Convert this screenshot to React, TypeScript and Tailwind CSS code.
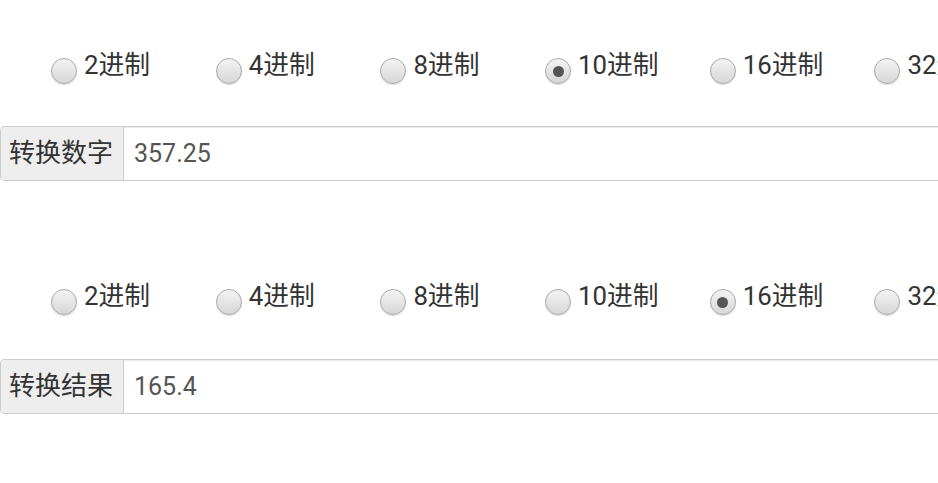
import React from "react";

const bases = ["2进制", "4进制", "8进制", "10进制", "16进制", "32进制"];

function Radio({ label, checked }: { label: string; checked: boolean }) {
  return (
    <label className="flex w-[164.7px] shrink-0 items-start">
      <span className="mt-[8px] flex h-[26px] w-[26px] items-center justify-center rounded-full border border-[#a9a9a9] bg-[linear-gradient(#f4f4f4,#d6d6d6)] shadow-[0_1px_1px_rgba(0,0,0,0.15)]">
        {checked && <span className="h-[11px] w-[11px] rounded-full bg-[#555]" />}
      </span>
      <span className="ml-[7px] text-[25.8px] leading-[30px] text-[#333]">{label}</span>
    </label>
  );
}

function Section({
  checked,
  label,
  value,
  className,
}: {
  checked: number;
  label: string;
  value: string;
  className: string;
}) {
  return (
    <div>
      <div className="flex pl-[51px]">
        {bases.map((b, i) => (
          <Radio key={b} label={b} checked={i === checked} />
        ))}
      </div>
      <div
        className={`${className} flex h-[55px] w-[1100px] rounded-[4px] border border-[#cccccc] shadow-[inset_0_1px_1px_rgba(0,0,0,0.08)]`}
      >
        <div className="flex w-[123px] items-center rounded-l-[4px] border-r border-[#cccccc] bg-[#eeeeee] pl-[8px] text-[26px] text-[#333]">
          {label}
        </div>
        <div className="flex flex-1 items-center pl-[10px] text-[25px] text-[#555]">{value}</div>
      </div>
    </div>
  );
}

export default function App() {
  return (
    <div
      className="flex h-[483px] w-[938px] flex-col gap-[100px] overflow-hidden bg-white pt-[50px]"
      style={{ fontFamily: 'Roboto, "Noto Sans CJK SC", sans-serif' }}
    >
      <Section checked={3} label="转换数字" value="357.25" className="mt-[42px]" />
      <Section checked={4} label="转换结果" value="165.4" className="mt-[44px]" />
    </div>
  );
}
